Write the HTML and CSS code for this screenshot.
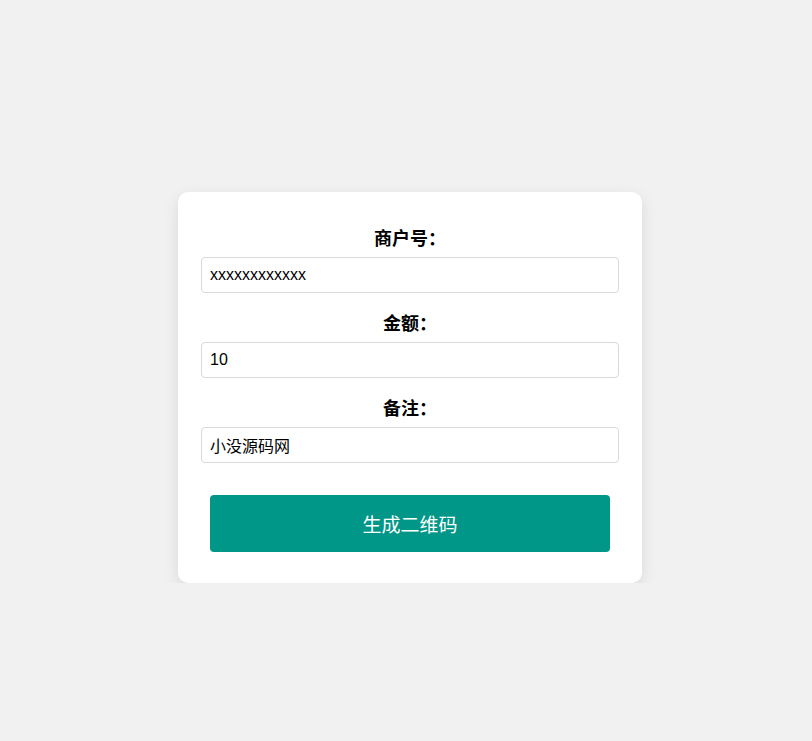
FILE: index.html
```html
<!DOCTYPE html>
<html lang="zh-CN">
<head>
<meta charset="UTF-8">
<title>生成二维码</title>
<link rel="stylesheet" href="styles.css">
</head>
<body>
<main class="page">
  <form class="card">
    <div class="field">
      <label class="label" for="mch">商户号：</label>
      <input class="input" id="mch" type="text" value="xxxxxxxxxxxx">
    </div>
    <div class="field">
      <label class="label" for="amount">金额：</label>
      <input class="input" id="amount" type="text" value="10">
    </div>
    <div class="field">
      <label class="label" for="remark">备注：</label>
      <input class="input" id="remark" type="text" value="小没源码网">
    </div>
    <button class="btn" type="button">生成二维码</button>
  </form>
</main>
</body>
</html>
```
FILE: styles.css
```css
html, body {
  margin: 0;
  padding: 0;
  background: #f1f1f1;
  font-family: "Liberation Sans", "Noto Sans CJK SC", sans-serif;
}

.page {
  display: flex;
  justify-content: center;
  padding: 192px 0 0 8px;
}

.card {
  width: 464px;
  box-sizing: border-box;
  background: #ffffff;
  border-radius: 10px;
  box-shadow: 0 5px 15px rgba(0, 0, 0, 0.1);
  padding: 34px 23px 31px;
  display: flex;
  flex-direction: column;
}

.field {
  display: flex;
  flex-direction: column;
  margin-bottom: 18px;
}

.field:last-of-type {
  margin-bottom: 32px;
}

.label {
  display: block;
  text-align: center;
  font-family: "Noto Sans CJK SC", sans-serif;
  font-weight: bold;
  font-size: 18px;
  line-height: 22px;
  color: #000;
  margin-bottom: 9px;
}

.input {
  box-sizing: border-box;
  width: 100%;
  height: 36px;
  margin: 0;
  padding: 0 8px;
  border: 1px solid #d9d9d9;
  border-radius: 4px;
  font-family: "Liberation Sans", "Noto Sans CJK SC", sans-serif;
  font-size: 16px;
  color: #000;
  background: #fff;
  outline: none;
}

.btn {
  align-self: center;
  width: 400px;
  height: 57px;
  border: none;
  border-radius: 4px;
  background: #009688;
  color: #ffffff;
  font-family: "Noto Sans CJK SC", sans-serif;
  font-size: 19px;
  cursor: pointer;
}
```
